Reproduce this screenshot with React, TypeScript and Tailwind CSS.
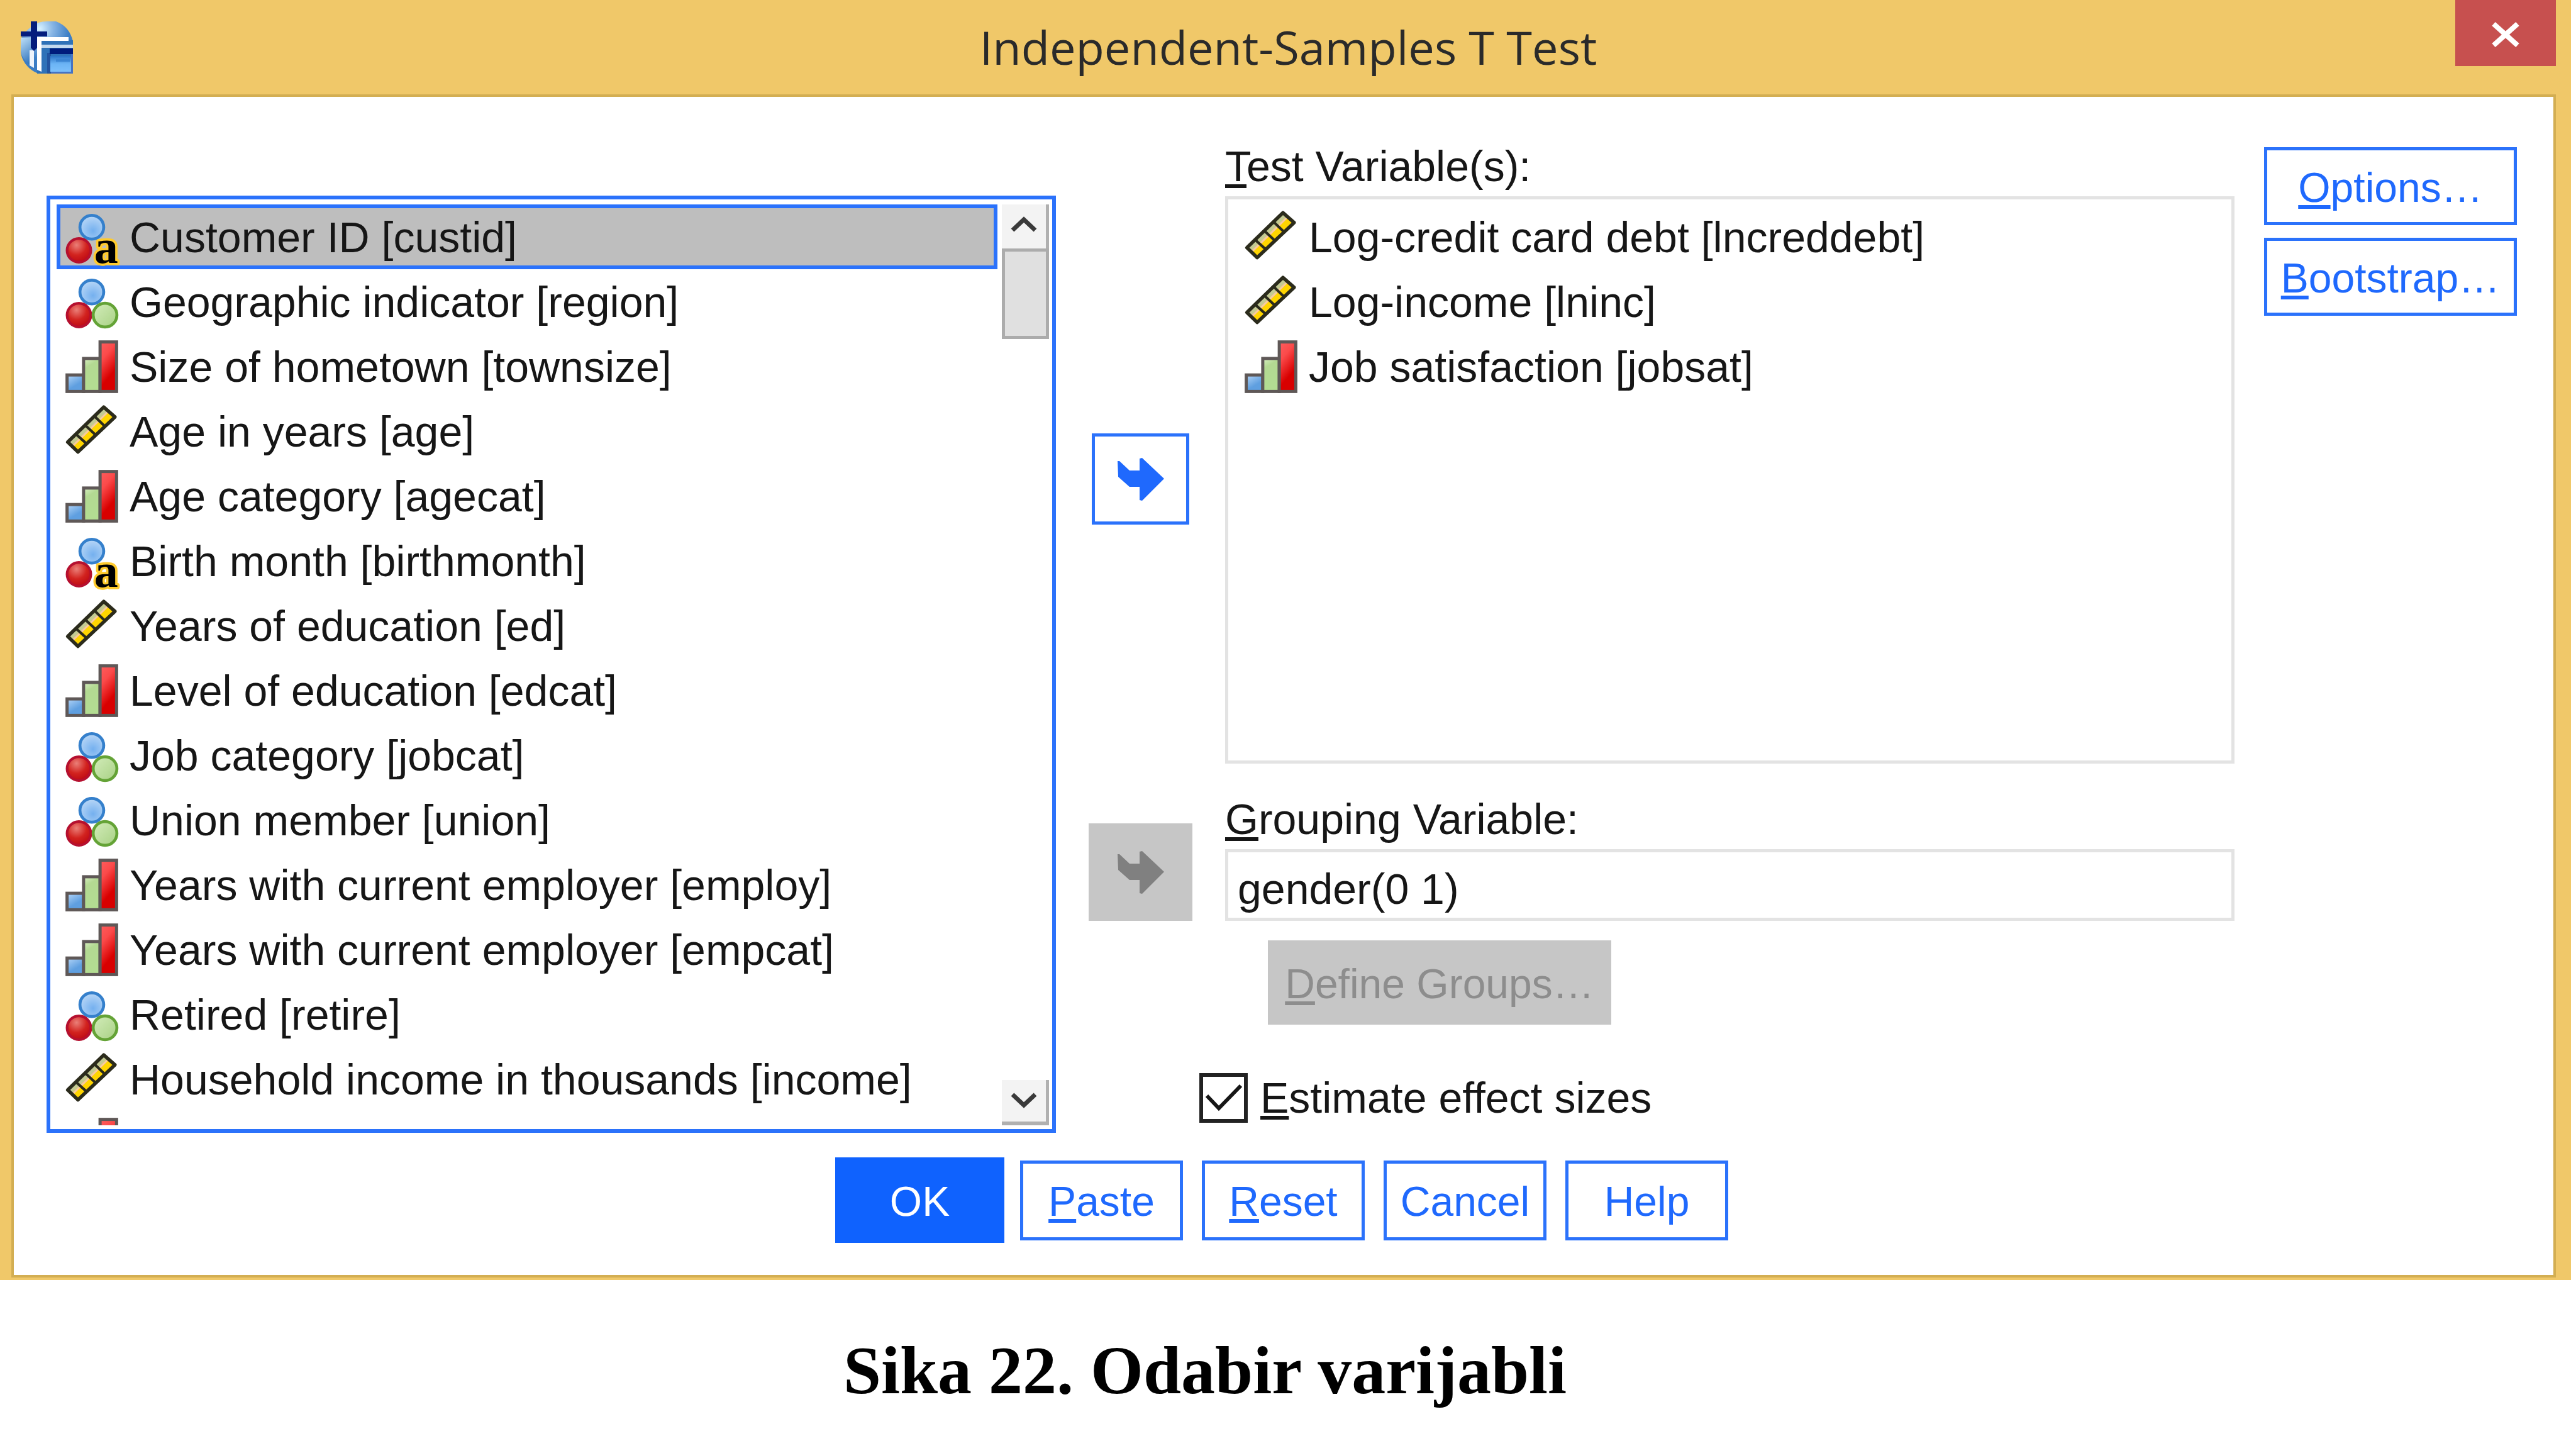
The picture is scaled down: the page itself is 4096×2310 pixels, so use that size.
import { useId, type ReactNode } from "react";

type Kind = "nominal" | "text" | "ordinal" | "scale";
type Variable = { kind: Kind; label: string };

const SOURCE: Variable[] = [
  { kind: "text", label: "Customer ID [custid]" },
  { kind: "nominal", label: "Geographic indicator [region]" },
  { kind: "ordinal", label: "Size of hometown [townsize]" },
  { kind: "scale", label: "Age in years [age]" },
  { kind: "ordinal", label: "Age category [agecat]" },
  { kind: "text", label: "Birth month [birthmonth]" },
  { kind: "scale", label: "Years of education [ed]" },
  { kind: "ordinal", label: "Level of education [edcat]" },
  { kind: "nominal", label: "Job category [jobcat]" },
  { kind: "nominal", label: "Union member [union]" },
  { kind: "ordinal", label: "Years with current employer [employ]" },
  { kind: "ordinal", label: "Years with current employer [empcat]" },
  { kind: "nominal", label: "Retired [retire]" },
  { kind: "scale", label: "Household income in thousands [income]" },
  { kind: "ordinal", label: "" },
];

const TESTED: Variable[] = [
  { kind: "scale", label: "Log-credit card debt [lncreddebt]" },
  { kind: "scale", label: "Log-income [lninc]" },
  { kind: "ordinal", label: "Job satisfaction [jobsat]" },
];

function CirclesIcon({ letter }: { letter: boolean }) {
  const id = useId();
  return (
    <svg viewBox="0 0 16 16" className="size-[84px] shrink-0 overflow-visible" aria-hidden="true">
      <defs>
        <radialGradient id={id + "b"} cx="0.55" cy="0.65" r="0.6">
          <stop offset="0" stopColor="#74b0ef" />
          <stop offset="1" stopColor="#b4d4f6" />
        </radialGradient>
        <radialGradient id={id + "r"} cx="0.4" cy="0.28" r="0.7">
          <stop offset="0" stopColor="#ea7f78" />
          <stop offset="0.6" stopColor="#d2231f" />
          <stop offset="1" stopColor="#c00c14" />
        </radialGradient>
        <linearGradient id={id + "g"} x1="0" y1="0" x2="1" y2="1">
          <stop offset="0" stopColor="#d3ecba" />
          <stop offset="1" stopColor="#a8d184" />
        </linearGradient>
      </defs>
      <circle cx="8" cy="5" r="3.6" fill={`url(#${id}b)`} stroke="#3580cc" strokeWidth="0.9" />
      <circle cx="4.1" cy="12" r="3.6" fill={`url(#${id}r)`} stroke="#b5102f" strokeWidth="0.8" />
      {letter ? (
        <text
          x="8.7"
          y="15.9"
          fontFamily="Liberation Serif, serif"
          fontWeight="700"
          fontSize="14.5"
          fill="#000"
          stroke="#ffcb2e"
          strokeWidth="1.4"
          strokeLinejoin="round"
          paintOrder="stroke"
        >
          a
        </text>
      ) : (
        <circle cx="12" cy="12" r="3.6" fill={`url(#${id}g)`} stroke="#64a336" strokeWidth="0.9" />
      )}
    </svg>
  );
}

function BarsIcon() {
  const id = useId();
  return (
    <svg viewBox="0 0 16 16" className="size-[84px] shrink-0" aria-hidden="true">
      <defs>
        <linearGradient id={id + "b"} x1="0" y1="0" x2="0.6" y2="1">
          <stop offset="0" stopColor="#b5d6f8" />
          <stop offset="0.7" stopColor="#5f9fe0" />
        </linearGradient>
        <linearGradient id={id + "g"} x1="0" y1="0" x2="0.3" y2="1">
          <stop offset="0" stopColor="#d9efc4" />
          <stop offset="0.3" stopColor="#b3d992" />
          <stop offset="1" stopColor="#b3dd92" />
        </linearGradient>
        <linearGradient id={id + "r"} x1="0" y1="0" x2="0.4" y2="1">
          <stop offset="0" stopColor="#ff5e5e" />
          <stop offset="0.35" stopColor="#fb4a4a" />
          <stop offset="0.8" stopColor="#d80000" />
        </linearGradient>
      </defs>
      <g stroke="#5f5857" strokeWidth="0.95">
        <rect x="0.5" y="10.5" width="5" height="5" fill={`url(#${id}b)`} />
        <rect x="5.5" y="5.5" width="5" height="10" fill={`url(#${id}g)`} />
        <rect x="10.5" y="0.5" width="5" height="15" fill={`url(#${id}r)`} />
      </g>
    </svg>
  );
}

function RulerIcon() {
  return (
    <svg viewBox="0 0 16 16" className="size-[84px] shrink-0 overflow-visible" aria-hidden="true">
      <path d="M0.7 11.2 11.6 0.6 15 3.6 3.8 14.2Z" fill="#ffd500" />
      <path d="M0.7 11.2 11.6 0.6 12.8 1.7 1.9 12.3Z" fill="#c3ca93" />
      <path d="M1.9 12.3 12.8 1.7 13.2 2.1 2.3 12.7Z" fill="#f6c9a4" />
      <g stroke="#2b2b1c" fill="none">
        <path d="M3.2 8.8 6.4 11.7M6 6.1 9.1 9M8.8 3.4 11.9 6.4" strokeWidth="0.8" />
        <path d="M0.7 11.2 11.6 0.6 15 3.6 3.8 14.2Z" strokeWidth="1.05" strokeLinejoin="round" />
      </g>
    </svg>
  );
}

function VariableIcon({ kind }: { kind: Kind }) {
  if (kind === "ordinal") return <BarsIcon />;
  if (kind === "scale") return <RulerIcon />;
  return <CirclesIcon letter={kind === "text"} />;
}

function VariableRow({ item, selected = false }: { item: Variable; selected?: boolean }) {
  return (
    <li
      role="option"
      aria-selected={selected}
      className={
        "flex h-[103px] shrink-0 items-center gap-[18px] border-[6px] px-2 whitespace-nowrap " +
        (selected ? "border-[#2b72fb] bg-[#bebebe]" : "border-transparent")
      }
    >
      <VariableIcon kind={item.kind} />
      <span>{item.label}</span>
    </li>
  );
}

function AppIcon() {
  return (
    <svg viewBox="0 0 83 83" className="size-[83px]" aria-hidden="true">
      <defs>
        <radialGradient id="globe" cx="0.36" cy="0.14" r="0.75">
          <stop offset="0" stopColor="#d8f2ff" />
          <stop offset="0.35" stopColor="#86b4e4" />
          <stop offset="0.75" stopColor="#3d7fc6" />
          <stop offset="1" stopColor="#3a7cc4" />
        </radialGradient>
        <linearGradient id="side" x1="0" y1="0" x2="0.3" y2="1">
          <stop offset="0" stopColor="#bfe0f8" />
          <stop offset="1" stopColor="#3477bf" />
        </linearGradient>
        <linearGradient id="pane" x1="0" y1="0" x2="0" y2="1">
          <stop offset="0" stopColor="#2a72c4" />
          <stop offset="0.5" stopColor="#6bb4f5" />
          <stop offset="1" stopColor="#7cc0fb" />
        </linearGradient>
      </defs>
      <path d="M18 8Q26 0 42 0H56C72 6 80 18 83 32V83H28C10 76 0 60 0 46V28Q8 14 18 8Z" fill="url(#globe)" />
      <path d="M0 26H18V72C6 64 0 54 0 46Z" fill="url(#side)" />
      <path d="M26 30H83V83H26Z" fill="#2f72b8" />
      <path d="M33 37H83V42H33Z" fill="#c3d9ee" />
      <path d="M26 25H76V31H33V80L26 77Z" fill="#fff" />
      <path d="M14 46H21V74L14 70Z" fill="#eef4fb" />
      <path d="M42 50H48V83H42Z" fill="#2354a0" />
      <path d="M47 55H83V80H47Z" fill="url(#pane)" />
      <path d="M56 60H78V64H56Z" fill="#3a84d2" />
      <path d="M80 52H83V83H48V80H80Z" fill="#4673c4" />
      <path d="M46 43H83V52H46Z" fill="#001c7c" />
      <path d="M16 0H26V16H42V24H26V42L21 47L16 42V24H0V16H16Z" fill="#041d7d" />
    </svg>
  );
}

function MoveArrow() {
  return (
    <svg viewBox="0 0 74 68" className="h-[68px] w-[74px]" fill="currentColor" aria-hidden="true">
      <path d="M0 5 3 5 19 20H35V1L39 0 74 33 39 68 35 67V46H19L1 30Z" />
    </svg>
  );
}

function Chevron({ down = false }: { down?: boolean }) {
  return (
    <svg viewBox="0 0 42 28" className="h-7 w-[42px]" fill="none" stroke="#3a3a3a" strokeWidth="7" aria-hidden="true">
      <path d={down ? "M3 4 21 21 39 4" : "M3 24 21 7 39 24"} />
    </svg>
  );
}

function Key({ children }: { children: ReactNode }) {
  return (
    <span className="underline decoration-[6px] underline-offset-[5px] [text-decoration-skip-ink:none]">
      {children}
    </span>
  );
}

const OUTLINE = "border-[5px] border-[#2b72fb] bg-white text-[#1f69fd]";

export default function App() {
  return (
    <main className="min-h-screen bg-white font-['Liberation_Sans',Arial,sans-serif] text-[68px] text-[#161616]">
      <section aria-labelledby="dialog-title" className="mr-2 bg-[#f0c869] pb-1">
        <header className="grid h-[150px] grid-cols-[1fr_auto_1fr] items-center pr-6 pl-[33px]">
          <AppIcon />
          <h1
            id="dialog-title"
            className="font-['Open_Sans',sans-serif] text-[74px] leading-[100px] whitespace-nowrap text-[#2a2a2a]"
          >
            Independent-Samples T Test
          </h1>
          <button
            type="button"
            aria-label="Close"
            className="flex h-[105px] w-40 items-center justify-center self-start justify-self-end bg-[#c7504f] pt-1"
          >
            <svg viewBox="0 0 44 40" className="h-10 w-11" fill="none" stroke="#fff" strokeWidth="8" aria-hidden="true">
              <path d="M3 3 41 37M41 3 3 37" />
            </svg>
          </button>
        </header>

        <div className="mr-6 ml-[18px] border-4 border-[#d3ae52] bg-white pt-20 pr-[58px] pb-[51px] pl-[52px]">
          <div className="flex items-start">
            <div className="mt-[77px] min-w-0 flex-1">
              <div className="flex h-[1490px] gap-[7px] border-[6px] border-[#2b72fb] pt-2 pr-[5px] pb-[6px] pl-[10px]">
                <ul role="listbox" aria-label="Variables" className="flex min-w-0 flex-1 flex-col overflow-hidden">
                  {SOURCE.map((item, index) => (
                    <VariableRow key={index} item={item} selected={index === 0} />
                  ))}
                </ul>
                <div className="flex w-[75px] flex-col">
                  <button
                    type="button"
                    aria-label="Scroll up"
                    className="flex h-[70px] items-center justify-center border-r-[5px] border-[#b0b0b0] bg-[#f3f3f3] pb-2"
                  >
                    <Chevron />
                  </button>
                  <div className="h-36 border-[5px] border-[#acacac] bg-[#e0e0e0]" />
                  <div className="flex-1" />
                  <button
                    type="button"
                    aria-label="Scroll down"
                    className="flex h-[72px] items-center justify-center border-r-[5px] border-b-[6px] border-[#b0b0b0] bg-[#f3f3f3]"
                  >
                    <Chevron down />
                  </button>
                </div>
              </div>
            </div>

            <div className="ml-[52px] flex w-[165px] flex-col items-center">
              <button
                type="button"
                aria-label="Move to test variables"
                className={"mt-[455px] flex h-[145px] w-[155px] items-center justify-center " + OUTLINE}
              >
                <MoveArrow />
              </button>
              <button
                type="button"
                disabled
                aria-label="Move to grouping variable"
                className="mt-[475px] flex h-[155px] w-[165px] items-center justify-center bg-[#c6c6c6] text-[#808080]"
              >
                <MoveArrow />
              </button>
            </div>

            <div className="ml-[52px] flex min-w-0 flex-1 flex-col items-start">
              <h2 id="test-label" className="leading-[60px]">
                <Key>T</Key>est Variable(s):
              </h2>
              <ul
                role="listbox"
                aria-labelledby="test-label"
                className="mt-[18px] h-[902px] w-full border-[5px] border-[#e3e3e3] px-3 py-2"
              >
                {TESTED.map((item) => (
                  <VariableRow key={item.label} item={item} />
                ))}
              </ul>
              <label htmlFor="grouping" className="mt-[58px] leading-[60px]">
                <Key>G</Key>rouping Variable:
              </label>
              <input
                id="grouping"
                type="text"
                defaultValue="gender(0 1)"
                className="mt-[18px] h-[114px] w-full border-[5px] border-[#e3e3e3] bg-white px-[15px] pt-3 outline-none"
              />
              <button
                type="button"
                disabled
                className="mt-[31px] ml-[68px] h-[134px] w-[546px] bg-[#c6c6c6] pt-1 text-[66px] text-[#8d8d8d]"
              >
                <Key>D</Key>efine Groups…
              </button>
              <div className="mt-[77px] -ml-[41px] flex items-center gap-5">
                <span className="relative flex">
                  <input
                    id="effect"
                    type="checkbox"
                    defaultChecked
                    className="h-[79px] w-[77px] appearance-none border-[6px] border-[#222222] bg-white"
                  />
                  <svg
                    viewBox="0 0 77 79"
                    className="pointer-events-none absolute inset-0 h-[79px] w-[77px]"
                    fill="none"
                    stroke="#161616"
                    strokeWidth="6"
                    aria-hidden="true"
                  >
                    <path d="M12 36 31 56 66 20" />
                  </svg>
                </span>
                <label htmlFor="effect" className="leading-[79px]">
                  <Key>E</Key>stimate effect sizes
                </label>
              </div>
            </div>

            <div className="ml-[47px] flex w-[402px] flex-col gap-5 text-[66px]">
              <button type="button" className={"h-[124px] pt-1 " + OUTLINE}>
                <Key>O</Key>ptions…
              </button>
              <button type="button" className={"h-[124px] pt-1 " + OUTLINE}>
                <Key>B</Key>ootstrap…
              </button>
            </div>
          </div>

          <footer className="mt-[39px] flex items-center justify-center gap-[30px] text-[66px]">
            <button type="button" className="-mr-[5px] h-[136px] w-[269px] bg-[#0f62fe] pt-1 text-white">
              OK
            </button>
            <button type="button" className={"h-[127px] w-[259px] pt-1 " + OUTLINE}>
              <Key>P</Key>aste
            </button>
            <button type="button" className={"h-[127px] w-[259px] pt-1 " + OUTLINE}>
              <Key>R</Key>eset
            </button>
            <button type="button" className={"h-[127px] w-[259px] pt-1 " + OUTLINE}>Cancel</button>
            <button type="button" className={"h-[127px] w-[259px] pt-1 " + OUTLINE}>Help</button>
          </footer>
        </div>
      </section>

      <p className="mt-[84px] pr-[264px] text-center font-['Liberation_Serif',serif] text-[108px] leading-[120px] font-bold text-black">
        Sika 22. Odabir varijabli
      </p>
    </main>
  );
}
